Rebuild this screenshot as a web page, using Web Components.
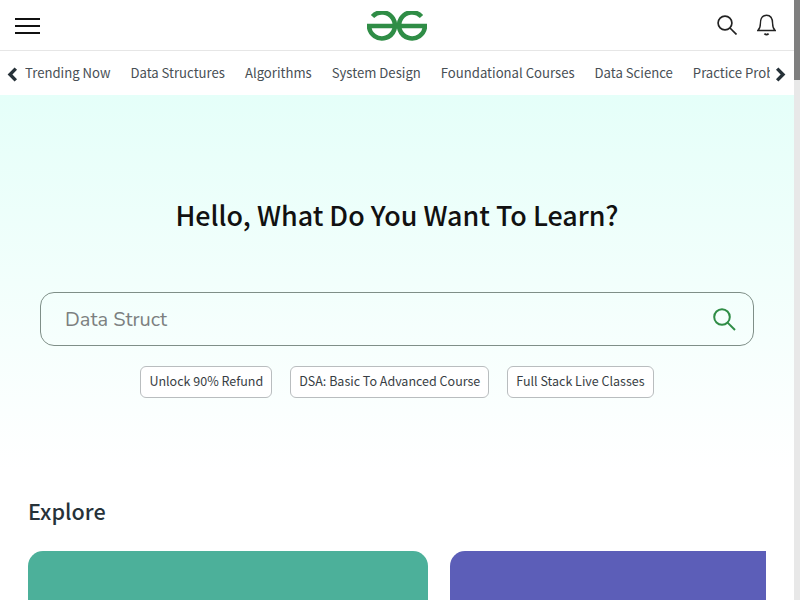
<!DOCTYPE html>
<html lang="en">
<head>
<meta charset="utf-8">
<title>GeeksforGeeks</title>
<style>
  html, body { margin: 0; height: 100%; overflow: hidden; }
  body { font-family: "Noto Sans CJK SC", "Noto Sans", sans-serif; }
</style>
</head>
<body>
<app-shell>
  <top-bar></top-bar>
  <nav-strip>
    <a>Trending Now</a>
    <a>Data Structures</a>
    <a>Algorithms</a>
    <a>System Design</a>
    <a>Foundational Courses</a>
    <a>Data Science</a>
    <a>Practice Problems</a>
    <a>Python</a>
  </nav-strip>
  <hero-search heading="Hello, What Do You Want To Learn?" placeholder="Data Struct">
    <hero-chip>Unlock 90% Refund</hero-chip>
    <hero-chip>DSA: Basic To Advanced Course</hero-chip>
    <hero-chip>Full Stack Live Classes</hero-chip>
  </hero-search>
  <explore-section heading="Explore">
    <explore-card color="#4cb09a"></explore-card>
    <explore-card color="#5c5eb8"></explore-card>
    <explore-card color="#4cb09a"></explore-card>
  </explore-section>
</app-shell>

<script>
class AppShell extends HTMLElement {
  constructor() {
    super();
    this.attachShadow({ mode: 'open' });
    this.shadowRoot.innerHTML = `
      <style>
        :host { display: flex; height: 100vh; overflow: hidden; background: #fff; }
        .page { flex: 1; min-width: 0; overflow: hidden; }
        .bar { flex: none; width: 6px; background: #e8e8e8; }
        .thumb { height: 80px; background: #7f7f7f; }
      </style>
      <div class="page"><slot></slot></div>
      <div class="bar"><div class="thumb"></div></div>
    `;
  }
}

class TopBar extends HTMLElement {
  constructor() {
    super();
    this.attachShadow({ mode: 'open' });
    this.shadowRoot.innerHTML = `
      <style>
        :host {
          display: grid;
          grid-template-columns: 1fr auto 1fr;
          align-items: center;
          height: 50px;
          padding: 0 18px;
          border-bottom: 1px solid #e6e6e6;
        }
        .burger { display: flex; flex-direction: column; gap: 5px; width: 25px; margin: 1px 0 0 -3px; }
        .burger span { display: block; height: 2px; background: #111; }
        .logo { width: 60px; height: 30px; margin-top: 2px; display: block; }
        .icons { display: flex; align-items: center; justify-content: flex-end; gap: 20px; }
        svg { display: block; }
      </style>
      <div class="burger"><span></span><span></span><span></span></div>
      <svg class="logo" viewBox="0 0 60 30" fill="none" stroke="#2f8d46" stroke-width="4.6">
        <path d="M5.5 5.5 A13 13 0 1 1 2 15 H58 A13 13 0 1 1 54.5 5.5"/>
      </svg>
      <div class="icons">
        <svg width="20" height="20" viewBox="0 0 20 20" fill="none" stroke="#222" stroke-width="1.7">
          <circle cx="8" cy="8" r="6.9"/>
          <path d="M13 13 L19.5 19.5"/>
        </svg>
        <svg width="19" height="22" viewBox="0 0 19 22" fill="none" stroke="#222" stroke-width="1.4">
          <path d="M.8 16.5 C3 14.6 3.4 12.5 3.4 9.5 C3.4 4.6 5.6 1.2 9.5 1.2 C13.4 1.2 15.6 4.6 15.6 9.5 C15.6 12.5 16 14.6 18.2 16.5 Z"/>
          <path d="M7.4 19.6 Q9.5 21.6 11.6 19.6" stroke-width="1.8"/>
        </svg>
      </div>
    `;
  }
}

class NavStrip extends HTMLElement {
  constructor() {
    super();
    this.attachShadow({ mode: 'open' });
    this.shadowRoot.innerHTML = `
      <style>
        :host {
          display: flex;
          align-items: center;
          height: 44px;
          background: #fff;
          color: #484f55;
          font-size: 13.13px;
        }
        .arrow { flex: none; display: flex; margin-top: 2px; }
        .arrow.left { width: 25px; justify-content: center; }
        .arrow.right { width: 24px; box-sizing: border-box; padding-left: 5px; }
        .track {
          flex: 1;
          min-width: 0;
          overflow: hidden;
          display: flex;
          gap: 20px;
          white-space: nowrap;
          margin-top: -2px;
        }
        ::slotted(a) { flex: none; }
        svg { display: block; }
      </style>
      <div class="arrow left">
        <svg width="11" height="15" viewBox="0 0 11 15" fill="none" stroke="#273239" stroke-width="3.4">
          <path d="M8.8 1.6 L3 7.5 L8.8 13.4"/>
        </svg>
      </div>
      <div class="track"><slot></slot></div>
      <div class="arrow right">
        <svg width="11" height="15" viewBox="0 0 11 15" fill="none" stroke="#273239" stroke-width="3.4">
          <path d="M2.2 1.6 L8 7.5 L2.2 13.4"/>
        </svg>
      </div>
    `;
  }
}

class HeroSearch extends HTMLElement {
  constructor() {
    super();
    this.attachShadow({ mode: 'open' });
    this.shadowRoot.innerHTML = `
      <style>
        :host {
          display: block;
          height: 375px;
          box-sizing: border-box;
          padding: 98px 40px 0;
          background: linear-gradient(180deg, #e5fff9 0%, #ffffff 100%);
          text-align: center;
        }
        h1 {
          margin: 0;
          font-size: 26.9px;
          line-height: 44px;
          font-weight: 500;
          color: #111;
        }
        .box {
          display: flex;
          align-items: center;
          justify-content: space-between;
          box-sizing: border-box;
          height: 54px;
          margin-top: 55px;
          padding: 0 17px 0 24px;
          border: 1px solid #7f8f88;
          border-radius: 14px;
        }
        .ph { font-family: "Nunito", Lato, sans-serif; font-size: 20px; color: #7c7f80; }
        .chips { display: flex; justify-content: center; gap: 18px; margin-top: 20px; }
        svg { display: block; }
      </style>
      <h1></h1>
      <div class="box">
        <span class="ph"></span>
        <svg width="23" height="23" viewBox="0 0 23 23" fill="none" stroke="#2f8d46" stroke-width="2">
          <circle cx="9" cy="9" r="7.8"/>
          <path d="M14.6 14.6 L22 22"/>
        </svg>
      </div>
      <div class="chips"><slot></slot></div>
    `;
  }

  connectedCallback() {
    this.shadowRoot.querySelector('h1').textContent = this.getAttribute('heading');
    this.shadowRoot.querySelector('.ph').textContent = this.getAttribute('placeholder');
  }
}

class HeroChip extends HTMLElement {
  constructor() {
    super();
    this.attachShadow({ mode: 'open' });
    this.shadowRoot.innerHTML = `
      <style>
        :host {
          display: flex;
          align-items: center;
          box-sizing: border-box;
          height: 32px;
          padding: 0 8px 3px;
          border: 1px solid #b9bdbf;
          border-radius: 6px;
          background: #fff;
          color: #383e44;
          font-size: 12.5px;
          white-space: nowrap;
        }
      </style>
      <slot></slot>
    `;
  }
}

class ExploreSection extends HTMLElement {
  constructor() {
    super();
    this.attachShadow({ mode: 'open' });
    this.shadowRoot.innerHTML = `
      <style>
        :host { display: block; padding: 0 28px; }
        h2 {
          margin: 0;
          padding-top: 21px;
          font-size: 21.6px;
          line-height: 40px;
          font-weight: 500;
          color: #273239;
        }
        .row {
          display: flex;
          gap: 22px;
          margin-top: 20px;
          overflow: hidden;
        }
      </style>
      <h2></h2>
      <div class="row"><slot></slot></div>
    `;
  }

  connectedCallback() {
    this.shadowRoot.querySelector('h2').textContent = this.getAttribute('heading');
  }
}

class ExploreCard extends HTMLElement {
  constructor() {
    super();
    this.attachShadow({ mode: 'open' });
    this.shadowRoot.innerHTML = `
      <style>
        :host {
          display: block;
          flex: none;
          width: 400px;
          height: 220px;
          border-radius: 15px;
          background: var(--card-color);
        }
      </style>
    `;
  }

  connectedCallback() {
    this.style.setProperty('--card-color', this.getAttribute('color'));
  }
}

customElements.define('app-shell', AppShell);
customElements.define('top-bar', TopBar);
customElements.define('nav-strip', NavStrip);
customElements.define('hero-search', HeroSearch);
customElements.define('hero-chip', HeroChip);
customElements.define('explore-section', ExploreSection);
customElements.define('explore-card', ExploreCard);
</script>
</body>
</html>
